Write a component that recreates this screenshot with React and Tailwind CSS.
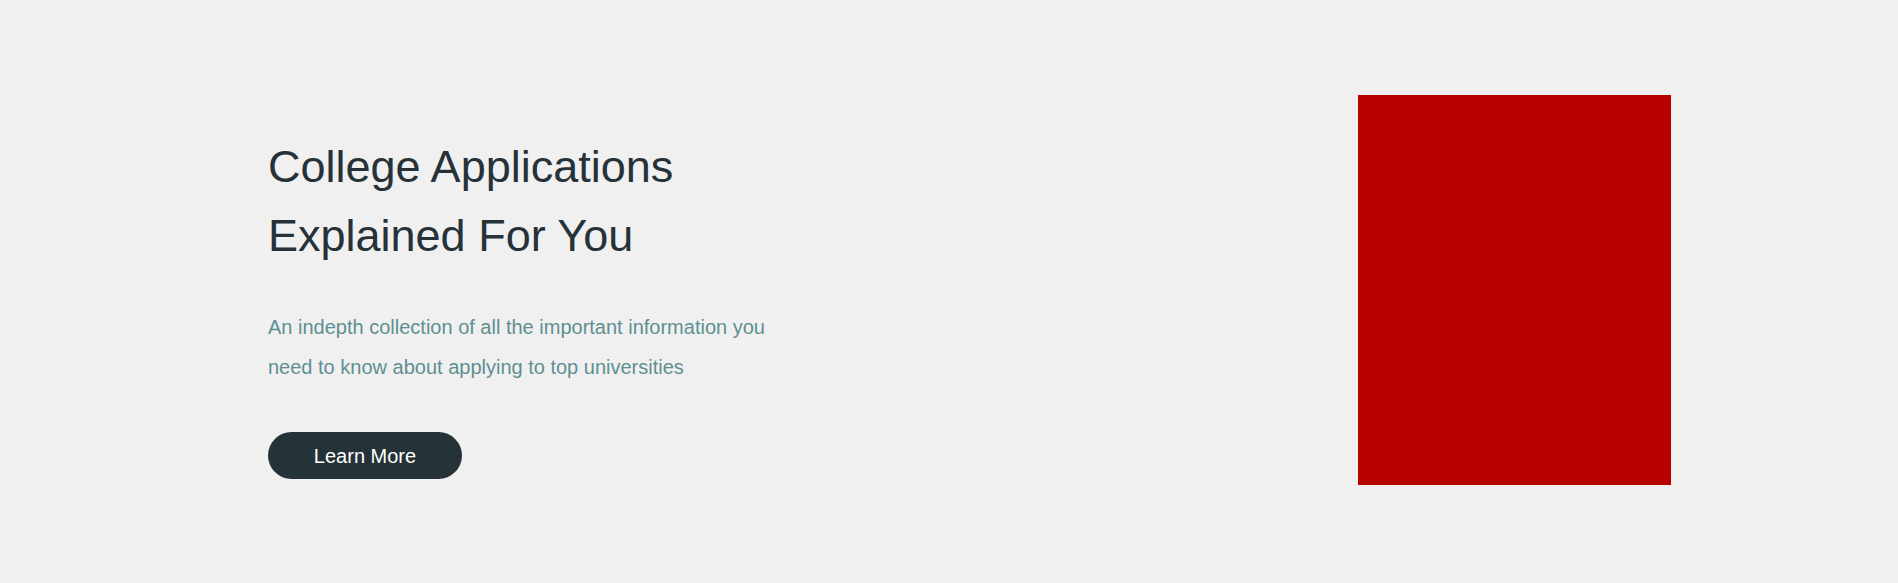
export default function App() {
  return (
    <section
      className="flex h-[583px] w-full items-start justify-between bg-[#f0f0f0] pl-[268px] pr-[227px]"
      style={{ fontFamily: '"Liberation Sans", Arial, sans-serif' }}
    >
      {/* copy */}
      <div className="pt-[132px]">
        <h1 className="text-[45px] font-normal leading-[69px] text-[#263238]">
          College Applications
          <br />
          Explained For You
        </h1>
        <p className="mt-[37px] w-[500px] text-[20px] leading-[40px] text-[#5e8f93]">
          An indepth collection of all the important information you need to know about applying to top universities
        </p>
        <button className="mt-[45px] h-[47px] w-[194px] rounded-full bg-[#253238] text-[20px] text-white">
          Learn More
        </button>
      </div>

      {/* image placeholder */}
      <div className="mt-[95px] h-[390px] w-[313px] bg-[#b80000]" />
    </section>
  );
}
